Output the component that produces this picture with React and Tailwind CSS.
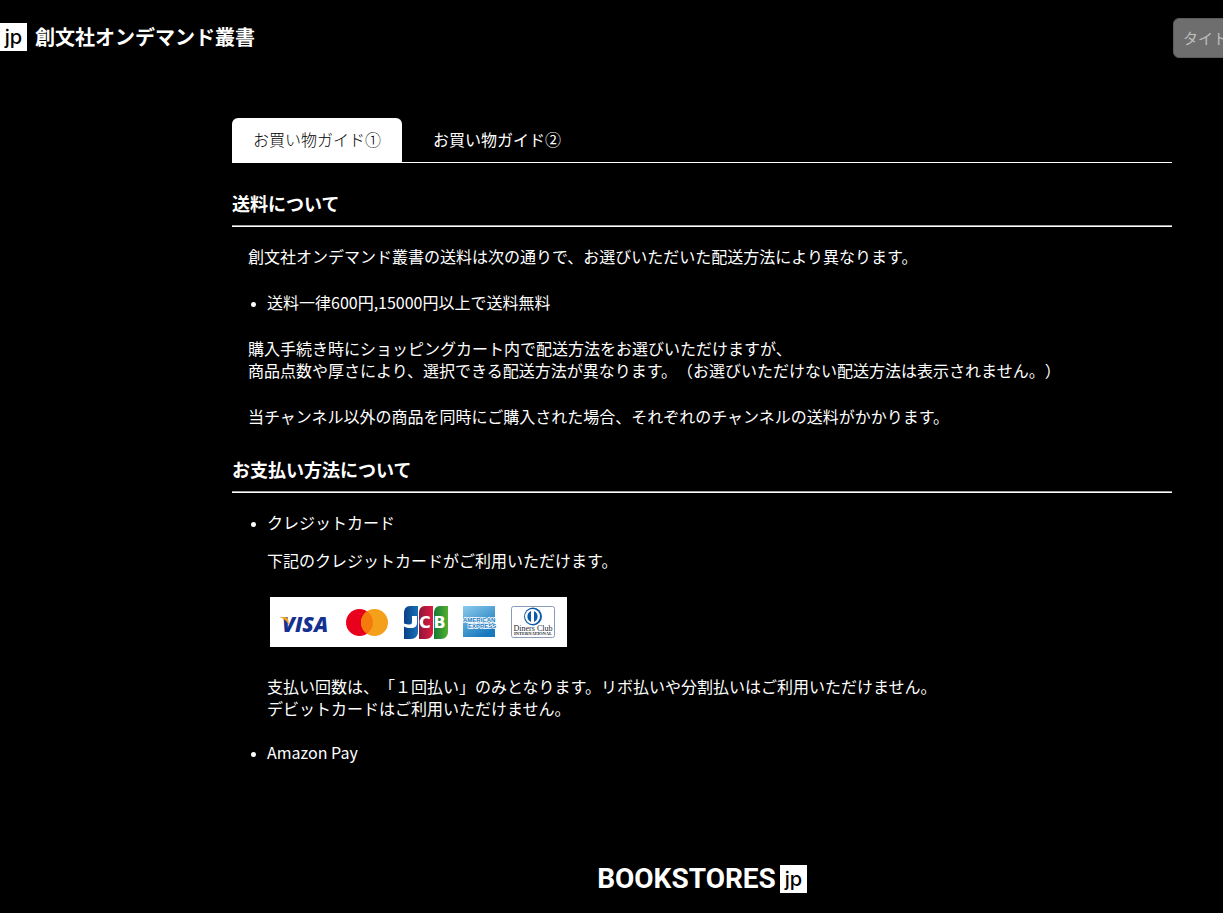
import React from 'react';

const JpMark = () => (
  <span className="flex h-7 w-[27px] shrink-0 items-center justify-center bg-white font-['Inter','Liberation_Sans',sans-serif] text-xl leading-5 font-medium text-black">
    jp
  </span>
);

const Header = () => (
  <header className="flex items-center justify-between overflow-hidden pt-[18px]">
    <a href="#" className="flex shrink-0 items-center gap-2 pb-0.5">
      <JpMark />
      <span className="text-xl leading-7 font-bold">創文社オンデマンド叢書</span>
    </a>
    <form className="w-[50px] shrink-0">
      <input
        type="search"
        aria-label="タイトル"
        placeholder="タイトル"
        className="h-10 w-60 rounded-md border border-[#5c5c5c] bg-[#6e6e6e] px-[9px] pb-0.5 text-[15px] text-white placeholder:text-[#bdbdbd]"
      />
    </form>
  </header>
);

const Tabs = () => (
  <nav className="flex gap-[10px] border-b border-white">
    <button type="button" className="h-11 rounded-t-md bg-white px-[21px] pb-0.5 font-light text-black">
      お買い物ガイド①
    </button>
    <button type="button" className="h-11 px-[21px] pb-0.5">
      お買い物ガイド②
    </button>
  </nav>
);

const Heading = ({ children }) => (
  <h2 className="border-b border-[#a0a0a0] pb-[10px] text-lg leading-6 font-bold shadow-[0_1px_0_#fff]">
    {children}
  </h2>
);

const CardBrands = () => (
  <svg width="297" height="50" viewBox="0 0 297 50" role="img" aria-label="VISA Mastercard JCB American Express Diners Club" className="ml-[3px] block">
    <defs>
      <linearGradient id="jcbBlue"><stop stopColor="#0a3f86" /><stop offset="1" stopColor="#1671b8" /></linearGradient>
      <linearGradient id="jcbRed"><stop stopColor="#8e1639" /><stop offset="1" stopColor="#e01a43" /></linearGradient>
      <linearGradient id="jcbGreen"><stop stopColor="#137a35" /><stop offset="1" stopColor="#55b030" /></linearGradient>
      <linearGradient id="amex" x2="0.6" y2="1"><stop stopColor="#8ccbec" /><stop offset="1" stopColor="#1678bd" /></linearGradient>
    </defs>
    <rect width="297" height="50" fill="#fff" />

    <text x="12" y="35" fontFamily="Open Sans, sans-serif" fontSize="21" fontWeight="800" fontStyle="italic" fill="#15308f">VISA</text>
    <path d="M9 20h6c1.500 0 2.500.8 3 2.300l1.400 6.200C17 24 14 21.500 9 20z" fill="#f0a023" />

    <circle cx="89.500" cy="25.500" r="13.500" fill="#e8001c" />
    <circle cx="104.500" cy="25.500" r="13.500" fill="#f4a01b" />
    <path d="M97 14.300a13.500 13.500 0 0 1 0 22.400a13.500 13.500 0 0 1 0-22.400z" fill="#f57a0c" />

    <path d="M140 9h8v26c0 4-3 7-7 7h-7V16c0-4 2-7 6-7z" fill="url(#jcbBlue)" />
    <path d="M155 9h8v26c0 4-3 7-7 7h-7V16c0-4 2-7 6-7z" fill="url(#jcbRed)" />
    <path d="M170 9h8v26c0 4-3 7-7 7h-7V16c0-4 2-7 6-7z" fill="url(#jcbGreen)" />
    {/* the J is a hook open to the left, the C and B nearly fill their plates */}
    <path d="M147 19v7c0 3-2 5-6 5-3 0-5-.5-7-1.500v-3c4 1.500 8 1.500 8-1v-6.500z" fill="#fff" />
    <g fontFamily="DejaVu Sans, sans-serif" fontSize="16" fontWeight="700" fill="#fff">
      <text x="149" y="31">C</text>
      <text x="163.500" y="31">B</text>
    </g>

    <rect x="193" y="9" width="32" height="31" fill="url(#amex)" />
    <g fontFamily="Liberation Sans, sans-serif" fontSize="6" fontWeight="700" fill="#1678bd" stroke="#fff" strokeWidth="1.500" paintOrder="stroke">
      <text x="193" y="25">AMERICAN</text>
      <text x="198" y="31">EXPRESS</text>
    </g>

    <rect x="241.500" y="9.500" width="43" height="31" rx="2" fill="#fff" stroke="#8a9bb8" />
    <circle cx="263" cy="19.500" r="9" fill="#0d5aa7" />
    <circle cx="262.500" cy="19.500" r="7.500" fill="#fff" />
    <path d="M261 14a6 6 0 0 0 0 11zM264 14a6 6 0 0 1 0 11z" fill="#0d5aa7" />
    <g fontFamily="Liberation Serif, serif" fill="#1a1f33" textAnchor="middle">
      <text x="263" y="34" fontSize="8">Diners Club</text>
      <text x="263" y="38" fontSize="4.500" fontWeight="700">INTERNATIONAL</text>
    </g>
  </svg>
);

const Shipping = () => (
  <section className="mt-7">
    <Heading>送料について</Heading>
    <div className="mt-[19px] space-y-6 px-4">
      <p>創文社オンデマンド叢書の送料は次の通りで、お選びいただいた配送方法により異なります。</p>
      <ul className="list-disc pl-[19px] marker:text-xs">
        <li>送料一律600円,15000円以上で送料無料</li>
      </ul>
      <p>
        購入手続き時にショッピングカート内で配送方法をお選びいただけますが、
        <br />
        商品点数や厚さにより、選択できる配送方法が異なります。（お選びいただけない配送方法は表示されません。）
      </p>
      <p>当チャンネル以外の商品を同時にご購入された場合、それぞれのチャンネルの送料がかかります。</p>
    </div>
  </section>
);

const Payment = () => (
  <section className="mt-[30px]">
    <Heading>お支払い方法について</Heading>
    <ul className="mt-[19px] list-disc space-y-[22px] px-4 pl-[35px] marker:text-xs">
      <li>
        クレジットカード
        <p className="mt-4 mb-[26px]">下記のクレジットカードがご利用いただけます。</p>
        <CardBrands />
        <p className="mt-7">
          支払い回数は、「１回払い」のみとなります。リボ払いや分割払いはご利用いただけません。
          <br />
          デビットカードはご利用いただけません。
        </p>
      </li>
      <li>Amazon Pay</li>
    </ul>
  </section>
);

export default function App() {
  return (
    <div className="min-h-screen overflow-hidden bg-black font-['Noto_Sans_CJK_JP',sans-serif] text-base leading-[22px] text-white [text-spacing-trim:space-all]">
      <Header />
      <div className="mr-[51px] ml-[232px] pt-[60px]">
        <main>
          <Tabs />
          <Shipping />
          <Payment />
        </main>
        <footer className="mt-[102px] flex justify-center pb-5">
          <a href="#" className="flex items-center gap-1">
            <span className="font-['Roboto','Liberation_Sans',sans-serif] text-[28px] leading-7 font-bold">BOOKSTORES</span>
            <JpMark />
          </a>
        </footer>
      </div>
    </div>
  );
}
